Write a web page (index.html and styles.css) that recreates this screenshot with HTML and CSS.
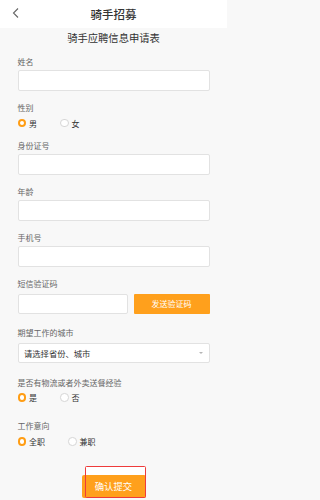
FILE: index.html
```html
<!DOCTYPE html>
<html lang="zh-CN">
<head>
<meta charset="utf-8">
<meta name="viewport" content="width=227">
<title>骑手招募</title>
<link rel="stylesheet" href="styles.css">
</head>
<body>
<div class="app">
<header class="topbar">
  <svg class="back" width="8" height="10" viewBox="0 0 8 10"><polyline points="6,0.5 1.5,5 6,9.5" fill="none" stroke="#666" stroke-width="1.1"/></svg>
  <h1 class="title">骑手招募</h1>
</header>
<main class="page">
  <h2 class="subtitle">骑手应聘信息申请表</h2>
  <form class="form">
    <div class="field f-first">
      <div class="label">姓名</div>
      <div class="input"></div>
    </div>
    <div class="field">
      <div class="label">性别</div>
      <div class="radios">
        <span class="opt"><i class="radio on"></i>男</span>
        <span class="opt"><i class="radio"></i>女</span>
      </div>
    </div>
    <div class="field f-after-radio">
      <div class="label">身份证号</div>
      <div class="input"></div>
    </div>
    <div class="field">
      <div class="label">年龄</div>
      <div class="input"></div>
    </div>
    <div class="field">
      <div class="label">手机号</div>
      <div class="input"></div>
    </div>
    <div class="field">
      <div class="label">短信验证码</div>
      <div class="sms-row">
        <div class="input sms-input"></div>
        <div class="sms-btn">发送验证码</div>
      </div>
    </div>
    <div class="field f-city">
      <div class="label">期望工作的城市</div>
      <div class="input select"><span>请选择省份、城市</span><i class="caret"></i></div>
    </div>
    <div class="field f-exp">
      <div class="label">是否有物流或者外卖送餐经验</div>
      <div class="radios">
        <span class="opt"><i class="radio on"></i>是</span>
        <span class="opt"><i class="radio"></i>否</span>
      </div>
    </div>
    <div class="field f-intent">
      <div class="label">工作意向</div>
      <div class="radios">
        <span class="opt"><i class="radio on"></i>全职</span>
        <span class="opt"><i class="radio"></i>兼职</span>
      </div>
    </div>
    <div class="submit-wrap">
      <div class="submit">确认提交</div>
      <div class="highlight"></div>
    </div>
  </form>
</main>
</div>
</body>
</html>
```
FILE: styles.css
```css
* { box-sizing: border-box; }
html, body {
  margin: 0;
  padding: 0;
  background: #f8f8f8;
  font-family: "Noto Sans CJK SC", "Noto Sans", sans-serif;
  color: #333;
}
.app {
  width: 227px;
  height: 500px;
  overflow: hidden;
  background: #f8f8f8;
}
.topbar {
  height: 28px;
  background: #fff;
  display: flex;
  align-items: center;
  justify-content: center;
  position: relative;
}
.back {
  position: absolute;
  left: 12px;
  top: 8px;
}
.title {
  margin: 0;
  font-size: 11.5px;
  font-weight: 500;
  line-height: 28px;
  color: #333;
}
.page {
  padding: 0 17.5px;
}
.subtitle {
  margin: 0;
  font-size: 10.3px;
  font-weight: 400;
  line-height: 20px;
  text-align: center;
  color: #333;
}
.form {
  display: flex;
  flex-direction: column;
}
.field {
  margin-top: 11.5px;
  display: flex;
  flex-direction: column;
}
.f-first { margin-top: 8px; }
.f-after-radio { margin-top: 11px; }
.f-city { margin-top: 13px; }
.f-exp { margin-top: 13.5px; }
.f-intent { margin-top: 16px; }
.label {
  font-size: 8px;
  line-height: 12px;
  color: #666;
  margin-bottom: 2px;
}
.input {
  height: 20.5px;
  background: #fff;
  border: 1px solid #e2e2e2;
  border-radius: 2px;
}
.sms-row {
  display: flex;
  gap: 6px;
  margin-top: 1.5px;
}
.sms-input { flex: 1; }
.sms-btn {
  width: 76px;
  height: 20.5px;
  background: #ffa01c;
  border-radius: 1px;
  color: #fff;
  font-size: 8px;
  display: flex;
  align-items: center;
  justify-content: center;
}
.select {
  margin-top: 1.5px;
  display: flex;
  align-items: center;
  justify-content: space-between;
  padding: 0 6px 0 5.5px;
  font-size: 8.3px;
  color: #333;
}
.caret {
  width: 0;
  height: 0;
  border-left: 2px solid transparent;
  border-right: 2px solid transparent;
  border-top: 2.5px solid #b5b5b5;
}
.radios {
  display: flex;
  gap: 23px;
  margin-top: 1px;
  height: 12px;
  align-items: center;
}
.f-intent .radios { margin-top: 2px; }
.opt {
  display: flex;
  align-items: center;
  gap: 3px;
  font-size: 8px;
  color: #333;
}
.radio {
  width: 8.5px;
  height: 8.5px;
  border-radius: 50%;
  border: 1px solid #d6d6d6;
  background: #fff;
  display: inline-block;
}
.radio.on {
  border: 2.6px solid #ff9d14;
  background: #fff;
}
.submit-wrap {
  position: relative;
  display: flex;
  justify-content: center;
  margin-top: 27px;
}
.submit {
  width: 64px;
  height: 23px;
  background: #ffa01c;
  border-radius: 2px;
  color: #fff;
  font-size: 9.4px;
  display: flex;
  align-items: center;
  justify-content: center;
}
.highlight {
  position: absolute;
  left: 67.5px;
  top: -9px;
  width: 61px;
  height: 32px;
  border: 1px solid #ee3b3b;
  border-radius: 1.5px;
  background: linear-gradient(#fff 0 8px, transparent 8px);
}
```
